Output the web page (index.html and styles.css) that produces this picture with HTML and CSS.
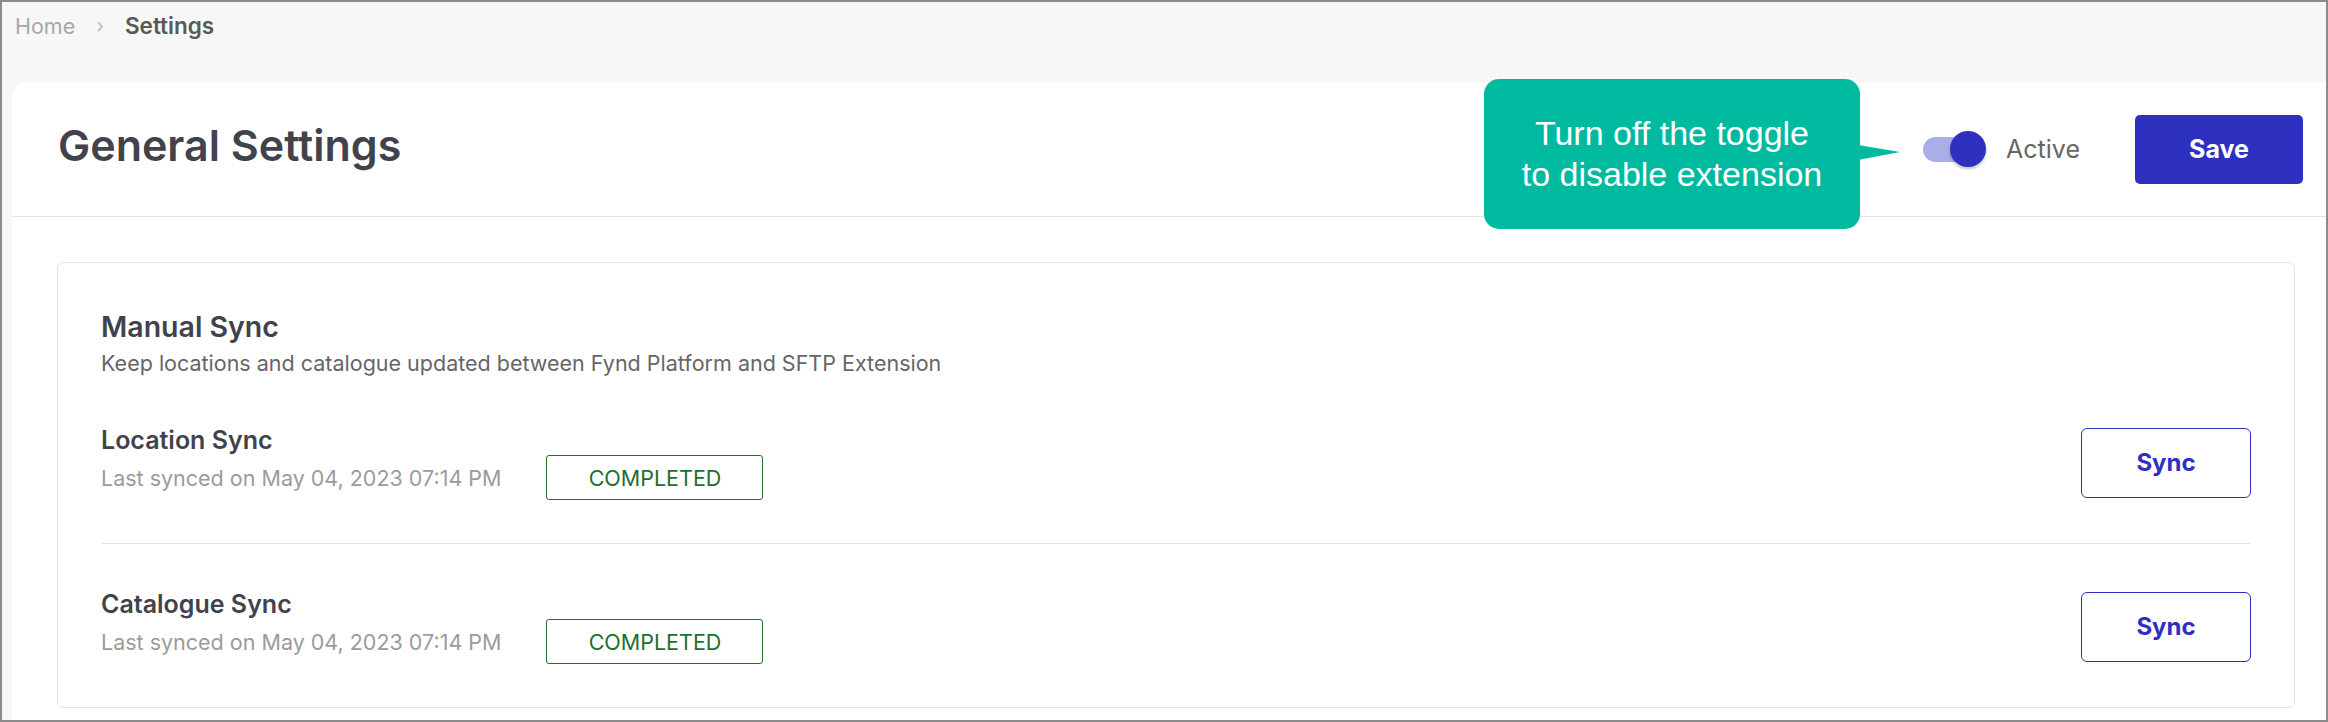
FILE: index.html
```html
<!DOCTYPE html>
<html lang="en">
<head>
  <meta charset="UTF-8">
  <title>Settings</title>
  <link rel="stylesheet" href="styles.css">
</head>
<body>
  <div class="frame">
    <nav class="crumbs">
      <span class="crumb">Home</span>
      <span class="crumb-sep">&#8250;</span>
      <span class="crumb current">Settings</span>
    </nav>

    <div class="card">
      <header class="card-head">
        <h1 class="title">General Settings</h1>
        <label class="toggle">
          <span class="track"><span class="knob"></span></span>
          <span class="toggle-label">Active</span>
        </label>
        <button class="btn-primary">Save</button>
      </header>

      <div class="card-body">
        <section class="panel">
          <h2 class="panel-title">Manual Sync</h2>
          <p class="panel-desc">Keep locations and catalogue updated between Fynd Platform and SFTP Extension</p>

          <div class="sync-row">
            <div class="sync-info">
              <h3 class="sync-name">Location Sync</h3>
              <div class="sync-meta">
                <span class="last-synced">Last synced on May 04, 2023 07:14 PM</span>
                <span class="badge">COMPLETED</span>
              </div>
            </div>
            <button class="btn-outline">Sync</button>
          </div>

          <div class="sync-row">
            <div class="sync-info">
              <h3 class="sync-name">Catalogue Sync</h3>
              <div class="sync-meta">
                <span class="last-synced">Last synced on May 04, 2023 07:14 PM</span>
                <span class="badge">COMPLETED</span>
              </div>
            </div>
            <button class="btn-outline">Sync</button>
          </div>
        </section>
      </div>
    </div>

    <div class="callout">Turn off the toggle<br>to disable extension</div>
  </div>
</body>
</html>
```

FILE: styles.css
```css
body {
  margin: 0;
  font-family: "Inter", "Noto Sans", sans-serif;
}

.frame {
  position: relative;
  width: 2328px;
  height: 722px;
  box-sizing: border-box;
  border: 2px solid #8b8b8b;
  background-color: #f7f7f7;
  display: flex;
  flex-direction: column;
  overflow: hidden;
}

/* breadcrumb */
.crumbs {
  height: 80px;
  box-sizing: border-box;
  padding: 10px 13px 0;
  display: flex;
  align-items: flex-start;
  gap: 21px;
  font-size: 21.5px;
  line-height: 28px;
}

.crumb {
  color: #a8a8a8;
}

.crumb-sep {
  color: #bdbdbd;
  font-size: 20px;
}

.crumb.current {
  color: #595959;
  font-weight: 600;
  font-size: 22.5px;
}

/* main card */
.card {
  flex: 1;
  margin-left: 10px;
  background-color: #fff;
  border-radius: 16px 0 0 0;
}

.card-head {
  height: 134px;
  padding: 0 23px 0 46px;
  border-bottom: 1px solid #e3e3e3;
  display: flex;
  align-items: center;
}

.card-head .title {
  flex: 1;
  margin: 0 0 8px 0;
  font-size: 43px;
  line-height: 48px;
  font-weight: 600;
  color: #41434c;
}

.toggle {
  display: flex;
  align-items: center;
  gap: 17px;
  margin-right: 55px;
}

.toggle .track {
  position: relative;
  width: 58px;
  height: 25px;
  border-radius: 13px;
  background-color: #a8aee8;
}

.toggle .knob {
  position: absolute;
  left: 27px;
  top: -6px;
  width: 36px;
  height: 36px;
  border-radius: 50%;
  background-color: #2f31be;
  box-shadow: 0 2px 3px rgba(0, 0, 0, 0.25);
}

.toggle .toggle-label {
  margin-left: 8px;
  font-size: 25px;
  color: #666;
}

.btn-primary {
  width: 168px;
  height: 69px;
  border: none;
  border-radius: 5px;
  background-color: #2e30bf;
  color: #fff;
  font-family: inherit;
  font-size: 25px;
  font-weight: 700;
}

/* sync panel */
.card-body {
  padding: 45px 31px 0 45px;
}

.panel {
  border: 1px solid #e3e3e3;
  border-radius: 6px;
  padding: 47px 43px 0 43px;
}

.panel-title {
  margin: 0;
  font-size: 28.5px;
  line-height: 34px;
  font-weight: 600;
  color: #41434c;
}

.panel-desc {
  margin: 5px 0 3px;
  font-size: 21.5px;
  line-height: 28px;
  color: #666;
}

.sync-row {
  padding: 45px 0 43px;
  display: flex;
  align-items: center;
  justify-content: space-between;
}

.sync-row + .sync-row {
  border-top: 1px solid #e3e3e3;
}

.sync-name {
  margin: 0;
  font-size: 25px;
  line-height: 30px;
  font-weight: 600;
  color: #41434c;
}

.sync-meta {
  display: flex;
  align-items: center;
  gap: 45px;
}

.last-synced {
  font-size: 21.5px;
  color: #9b9b9b;
}

.badge {
  width: 217px;
  height: 45px;
  box-sizing: border-box;
  border: 1px solid #23702f;
  border-radius: 3px;
  display: flex;
  align-items: center;
  justify-content: center;
  font-size: 21.5px;
  color: #1f6e2c;
}

.btn-outline {
  width: 170px;
  height: 70px;
  border: 1px solid #2e30bf;
  border-radius: 6px;
  background-color: #fff;
  color: #2e30bf;
  font-family: inherit;
  font-size: 24px;
  font-weight: 700;
}

/* annotation bubble */
.callout {
  position: absolute;
  left: 1482px;
  top: 77px;
  width: 376px;
  height: 150px;
  border-radius: 15px;
  background-color: #00ba9f;
  color: #fff;
  font-family: "Liberation Sans", Arial, sans-serif;
  font-size: 34px;
  line-height: 41px;
  text-align: center;
  display: flex;
  align-items: center;
  justify-content: center;
}

.callout::after {
  content: "";
  position: absolute;
  left: 374px;
  top: 66px;
  width: 42px;
  height: 15px;
  background-color: #00ba9f;
  clip-path: polygon(0 0, 100% 47%, 0 100%);
}
```
